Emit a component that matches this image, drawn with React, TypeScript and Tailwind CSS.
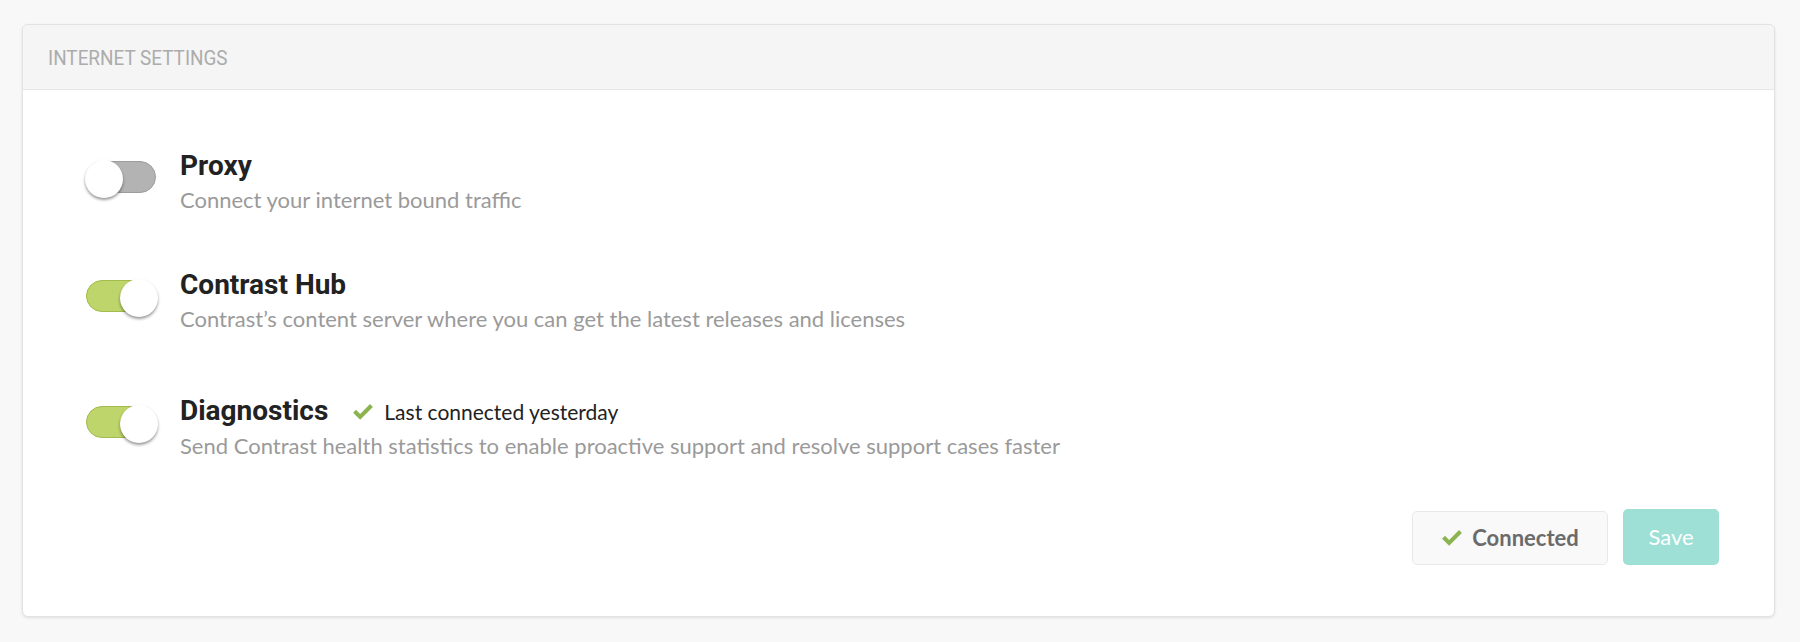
import React from "react";

const Check = ({ className }: { className?: string }) => (
  <svg viewBox="0 0 20 16" className={className} fill="currentColor">
    <path d="M1 8.6 L3.6 6 L7.4 9.8 L16.4 0.8 L19 3.4 L7.4 15 Z" />
  </svg>
);

const Toggle = ({ on }: { on: boolean }) => (
  <div
    className={
      on
        ? "relative w-[70px] h-[32px] rounded-full bg-[#bdd56a] border border-[#a2ba4e] shrink-0"
        : "relative w-[70px] h-[32px] rounded-full bg-[#b3b3b3] border border-[#9d9d9d] shrink-0"
    }
  >
    <div
      className={
        on
          ? "absolute top-[-2px] right-[-3px] w-[38px] h-[38px] rounded-full bg-white shadow-[0_2px_3px_rgba(0,0,0,0.4)]"
          : "absolute top-[-2px] left-[-2px] w-[38px] h-[38px] rounded-full bg-white shadow-[0_2px_3px_rgba(0,0,0,0.4)]"
      }
    />
  </div>
);

const Row = ({
  on,
  title,
  desc,
  extra,
  className,
}: {
  on: boolean;
  title: string;
  desc: string;
  extra?: React.ReactNode;
  className?: string;
}) => (
  <div className={"flex items-start " + (className ?? "")}>
    <div className="pt-[11px]">
      <Toggle on={on} />
    </div>
    <div className="ml-[24px] flex flex-col">
      <div className="flex items-baseline">
        <span
          className="text-[28px] leading-[32px] font-bold text-[#222]"
          style={{ fontFamily: "Roboto, sans-serif" }}
        >
          {title}
        </span>
        {extra}
      </div>
      <div
        className="mt-[3px] text-[22px] leading-[30px] text-[#9a9a9a]"
        style={{ fontFamily: "Lato, sans-serif" }}
      >
        {desc}
      </div>
    </div>
  </div>
);

export default function App() {
  return (
    <div className="min-h-[642px] w-full bg-[#f8f8f8] pt-[24px] pl-[22px] pr-[25px]">
      <div className="bg-white border border-[#e2e2e2] rounded-[6px] shadow-[0_1px_3px_rgba(0,0,0,0.1)] overflow-hidden">
        <div className="h-[65px] bg-[#f5f5f5] border-b border-[#e6e6e6] flex items-center pl-[25px] pt-[3px]">
          <span
            className="inline-block text-[21px] text-[#acacac] scale-x-[0.9] origin-left whitespace-nowrap"
            style={{ fontFamily: "Roboto, sans-serif" }}
          >
            INTERNET SETTINGS
          </span>
        </div>
        <div className="pt-[60px] pl-[63px] pr-[55px] pb-[51px]">
          <Row
            on={false}
            title="Proxy"
            desc="Connect your internet bound traffic"
          />
          <Row
            on={true}
            title="Contrast Hub"
            desc="Contrast’s content server where you can get the latest releases and licenses"
            className="mt-[54px]"
          />
          <Row
            on={true}
            title="Diagnostics"
            desc="Send Contrast health statistics to enable proactive support and resolve support cases faster"
            className="mt-[61px]"
            extra={
              <span
                className="ml-[24px] flex items-baseline text-[21px] text-[#222]"
                style={{ fontFamily: "Lato, sans-serif" }}
              >
                <Check className="w-[22px] h-[18px] text-[#8bb450] mr-[10px] self-center" />
                Last connected yesterday
              </span>
            }
          />
          <div className="mt-[48px] flex justify-end gap-[15px]">
            <button
              className="w-[196px] h-[54px] mt-[2px] rounded-[5px] bg-[#f9f9f9] border border-[#e8e8e8] flex items-center justify-center text-[22px] font-bold text-[#6b6b6b]"
              style={{ fontFamily: "Lato, sans-serif" }}
            >
              <Check className="w-[22px] h-[18px] text-[#8bb450] mr-[9px]" />
              Connected
            </button>
            <button
              className="w-[96px] h-[56px] rounded-[5px] bg-[#9ee0d6] flex items-center justify-center text-[22px] text-white"
              style={{ fontFamily: "Lato, sans-serif" }}
            >
              Save
            </button>
          </div>
        </div>
      </div>
    </div>
  );
}
